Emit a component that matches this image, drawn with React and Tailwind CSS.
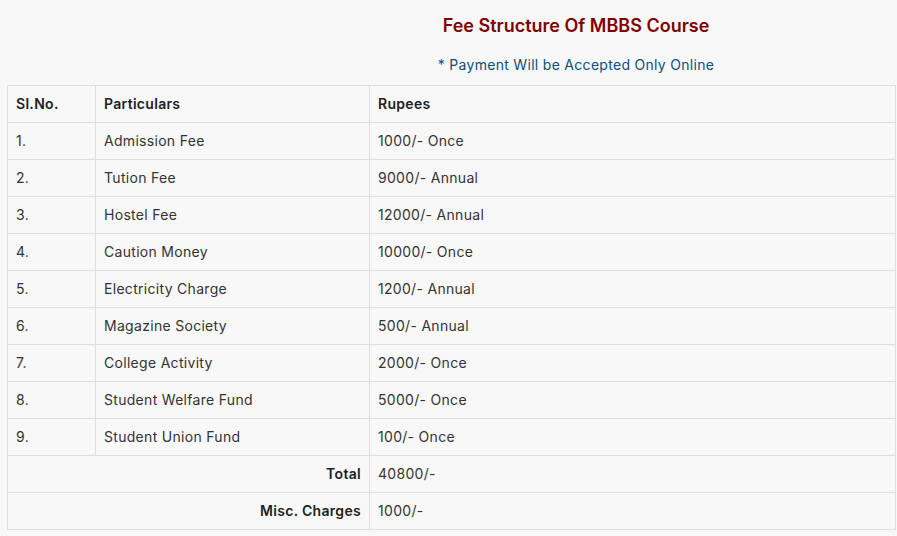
import React from 'react';

const fees = [
  ['1.', 'Admission Fee', '1000/- Once'],
  ['2.', 'Tution Fee', '9000/- Annual'],
  ['3.', 'Hostel Fee', '12000/- Annual'],
  ['4.', 'Caution Money', '10000/- Once'],
  ['5.', 'Electricity Charge', '1200/- Annual'],
  ['6.', 'Magazine Society', '500/- Annual'],
  ['7.', 'College Activity', '2000/- Once'],
  ['8.', 'Student Welfare Fund', '5000/- Once'],
  ['9.', 'Student Union Fund', '100/- Once'],
];

const App = () => {
  return (
    <div className="min-h-screen bg-[#f8f8f8] pl-[7px] pr-px font-['Inter',sans-serif] text-[14px] tracking-[0.3px] text-[#333]">
      <div className="pl-[249px] text-center">
        <h2 className="pt-[13px] text-[18px] font-semibold leading-[26px] tracking-normal text-[#800000]">
          Fee Structure Of MBBS Course
        </h2>
        <p className="mt-[13px] text-[14px] leading-[26px] text-[#0b4f7c]">
          * Payment Will be Accepted Only Online
        </p>
      </div>

      <table className="mt-[7px] w-full border-collapse border border-[#dddddd]">
        <thead>
          <tr className="h-[37px]">
            <th className="w-[88px] border border-[#dddddd] px-2 pb-px text-left font-semibold text-[#222]">Sl.No.</th>
            <th className="w-[274px] border border-[#dddddd] px-2 pb-px text-left font-semibold text-[#222]">Particulars</th>
            <th className="border border-[#dddddd] px-2 pb-px text-left font-semibold text-[#222]">Rupees</th>
          </tr>
        </thead>
        <tbody>
          {fees.map(([no, name, amount]) => (
            <tr key={no} className="h-[37px]">
              <td className="border border-[#dddddd] px-2 pb-px">{no}</td>
              <td className="border border-[#dddddd] px-2 pb-px">{name}</td>
              <td className="border border-[#dddddd] px-2 pb-px">{amount}</td>
            </tr>
          ))}
          <tr className="h-[37px]">
            <td colSpan={2} className="border border-[#dddddd] px-2 pb-px text-right font-semibold text-[#222]">Total</td>
            <td className="border border-[#dddddd] px-2 pb-px">40800/-</td>
          </tr>
          <tr className="h-[37px]">
            <td colSpan={2} className="border border-[#dddddd] px-2 pb-px text-right font-semibold text-[#222]">Misc. Charges</td>
            <td className="border border-[#dddddd] px-2 pb-px">1000/-</td>
          </tr>
        </tbody>
      </table>
    </div>
  );
};

export default App;
